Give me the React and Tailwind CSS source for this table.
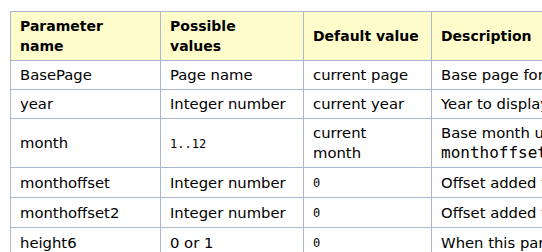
export default function App() {
  const mono = "font-['DejaVu_Sans_Mono',monospace] text-[12px]";
  const td = "border border-[#a9b6cf] px-[9px] py-1 align-middle text-[14.8px]";
  const th = "border border-[#a9b6cf] px-[9px] py-1 align-middle text-left font-bold text-[14px]";
  const rows = [
    ["BasePage", "Page name", false, "current page", false, <>Base page for the calendar</>],
    ["year", "Integer number", false, "current year", false, <>Year to display</>],
    ["month", "1..12", true, <>current<br />month</>, false, <>Base month used with<br /><span className="font-['DejaVu_Sans_Mono',monospace] text-[16px]">monthoffset</span></>],
    ["monthoffset", "Integer number", false, "0", true, <>Offset added to month</>],
    ["monthoffset2", "Integer number", false, "0", true, <>Offset added to month</>],
    ["height6", "0 or 1", false, "0", true, <>When this parameter is set</>],
  ];
  return (
    <div className="w-[542px] h-[252px] overflow-hidden bg-white pl-[10px] pt-[11px] font-['DejaVu_Sans',sans-serif] leading-5 text-black">
      <table className="border-collapse table-fixed w-[720px]">
        <colgroup>
          <col className="w-[150px]" />
          <col className="w-[143px]" />
          <col className="w-[128px]" />
          <col className="w-[299px]" />
        </colgroup>
        <thead>
          <tr className="bg-[#fefccb]">
            <th className={th}>Parameter<br />name</th>
            <th className={th}>Possible<br />values</th>
            <th className={`${th} whitespace-nowrap`}>Default value</th>
            <th className={`${th} whitespace-nowrap`}>Description</th>
          </tr>
        </thead>
        <tbody>
          {rows.map((r, i) => (
            <tr key={i}>
              <td className={td}>{r[0]}</td>
              <td className={`${td} whitespace-nowrap`}>{r[2] ? <span className={mono}>{r[1]}</span> : r[1]}</td>
              <td className={td}>{r[4] ? <span className={mono}>{r[3]}</span> : r[3]}</td>
              <td className={`${td} whitespace-nowrap`}>{r[5]}</td>
            </tr>
          ))}
        </tbody>
      </table>
    </div>
  );
}
